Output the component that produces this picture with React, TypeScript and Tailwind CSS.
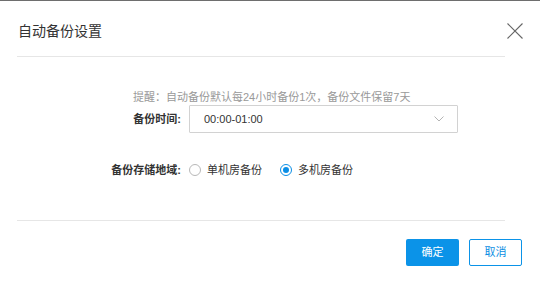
import { useState } from "react";

export default function App() {
  const [region, setRegion] = useState("multi");

  const options = [
    { value: "single", label: "单机房备份" },
    { value: "multi", label: "多机房备份" },
  ];

  return (
    <div
      className="w-[540px] h-[285px] bg-white border-t border-[#6e6e6e] text-[#333] overflow-hidden"
      style={{ fontFamily: '"Liberation Sans", "Noto Sans CJK SC", sans-serif' }}
    >
      {/* Header */}
      <div className="h-[55px] flex items-center justify-between pt-[4px] pl-[18px] pr-[17px]">
        <h1 className="text-[14px] leading-[20px] text-[#333]">自动备份设置</h1>
        <button className="w-[16px] h-[16px] text-[#666]" title="关闭">
          <svg viewBox="0 0 16 16" width="16" height="16" fill="none" stroke="currentColor" strokeWidth="1.1">
            <path d="M0.5 0.5L15.5 15.5M15.5 0.5L0.5 15.5" />
          </svg>
        </button>
      </div>
      <div className="h-px bg-[#e6e6e6] ml-[17px] mr-[35px]" />

      {/* Body */}
      <div className="pt-[33px]">
        <p className="pl-[133px] text-[11px] leading-[14px] text-[#999]">
          提醒：自动备份默认每24小时备份1次，备份文件保留7天
        </p>

        <div className="mt-[1px] flex items-center gap-[8px]">
          <label className="w-[181px] text-right text-[11px] font-bold text-[#333]">备份时间:</label>
          <div className="w-[269px] h-[28px] border border-[#d2d2d2] rounded-[1px] flex items-center justify-between pl-[14px] pr-[13px]">
            <span className="text-[11px] text-[#333]">00:00-01:00</span>
            <svg viewBox="0 0 10 6" width="10" height="6" fill="none" stroke="#b4b4b4" strokeWidth="1">
              <path d="M0.5 0.5L5 5L9.5 0.5" />
            </svg>
          </div>
        </div>

        <div className="mt-[27px] h-[20px] flex items-center gap-[8px]">
          <label className="w-[181px] text-right text-[11px] font-bold text-[#333]">备份存储地域:</label>
          <div className="flex items-center gap-[18px]">
            {options.map((o) => {
              const on = region === o.value;
              return (
                <button
                  key={o.value}
                  onClick={() => setRegion(o.value)}
                  className="flex items-center gap-[6px] text-[11px] text-[#333]"
                >
                  <span
                    className={
                      on
                        ? "w-[12px] h-[12px] rounded-full border border-[#0a8ee6] flex items-center justify-center"
                        : "w-[12px] h-[12px] rounded-full border border-[#b8b8b8]"
                    }
                  >
                    {on && <span className="w-[6px] h-[6px] rounded-full bg-[#0a8ee6]" />}
                  </span>
                  {o.label}
                </button>
              );
            })}
          </div>
        </div>
      </div>

      <div className="mt-[40px] h-px bg-[#e6e6e6] ml-[17px] mr-[35px]" />

      {/* Footer */}
      <div className="mt-[18px] flex justify-end gap-[10px] pr-[18px]">
        <button className="w-[53px] h-[27px] rounded-[2px] bg-[#0b93e8] text-white text-[11px]">确定</button>
        <button className="w-[53px] h-[27px] rounded-[2px] border border-[#0b93e8] bg-white text-[#0b8ee3] text-[11px]">
          取消
        </button>
      </div>
    </div>
  );
}
